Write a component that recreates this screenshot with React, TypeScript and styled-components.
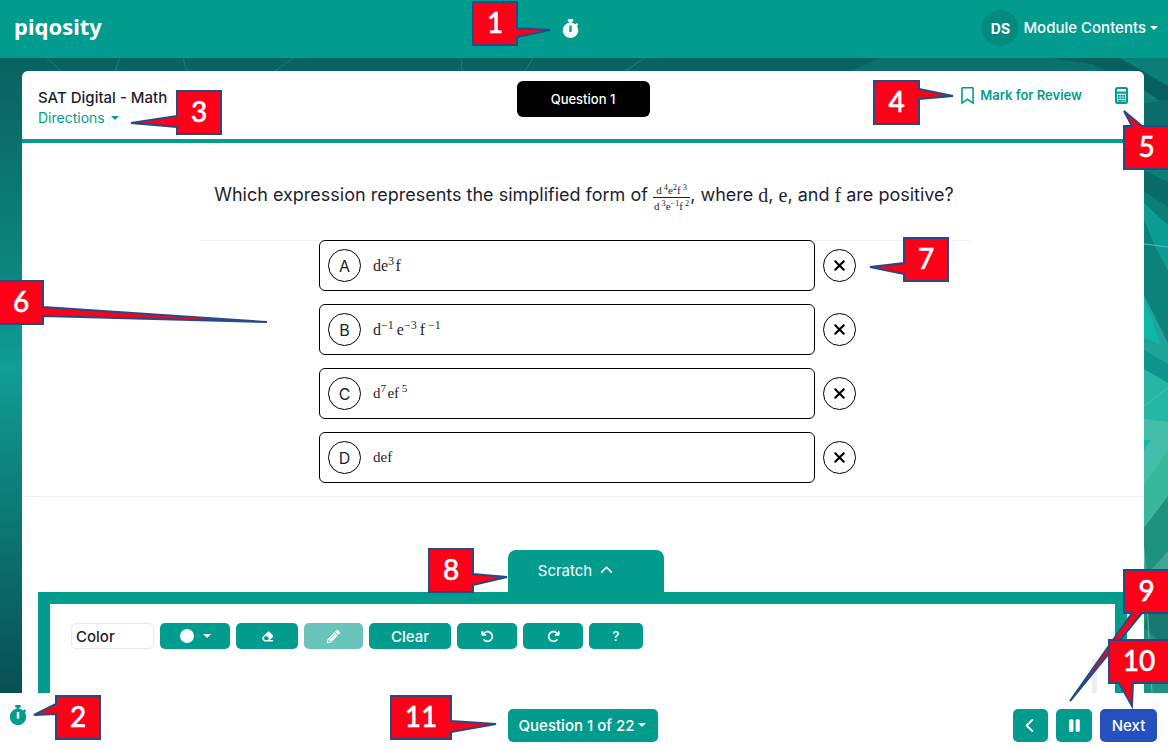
import React from 'react';
import styled, { createGlobalStyle, css } from 'styled-components';
import { FaStopwatch, FaPencilAlt } from 'react-icons/fa';
import {
  FaEraser,
  FaArrowRotateLeft,
  FaArrowRotateRight,
  FaPause,
  FaChevronLeft,
  FaChevronUp,
  FaXmark,
  FaRegBookmark,
} from 'react-icons/fa6';

const teal = '#029c8f';
const ink = '#1e1e2f';

const GlobalStyle = createGlobalStyle`
  *, *::before, *::after { box-sizing: border-box; }
  body { margin: 0; background: #fff; color: ${ink}; font-family: Inter, "Liberation Sans", sans-serif; }
  button { font-family: inherit; margin: 0; padding: 0; border: 0; background: none; color: inherit; cursor: pointer; }
  svg { display: block; flex: none; }
`;

const Page = styled.div`
  position: relative;
  min-height: 100vh;
  display: flex;
  flex-direction: column;
  overflow: hidden;
`;

const TopBar = styled.header`
  display: grid;
  grid-template-columns: 1fr auto 1fr;
  align-items: center;
  height: 58px;
  padding: 0 10px 2px 14px;
  background: ${teal};
  color: #fff;
`;

const Logo = styled.a`
  padding-bottom: 4px;
  color: #fff;
  text-decoration: none;
  font: 700 22px/32px "Noto Sans", "Open Sans", sans-serif;
`;

const TimerButton = styled.button`
  margin-right: 32px;
  font-size: 19px;
`;

const Account = styled.div`
  display: flex;
  justify-content: flex-end;
  align-items: center;
  gap: 5px;
`;

const Avatar = styled.span`
  display: grid;
  place-items: center;
  width: 36px;
  height: 36px;
  border-radius: 50%;
  background: #058a7d;
  font-size: 14px;
  font-weight: 700;
`;

const MenuButton = styled.button`
  display: flex;
  align-items: center;
  gap: 4px;
  font-size: 15px;
  font-weight: 500;
  line-height: 24px;
  white-space: nowrap;
`;

const Caret = styled.span`
  border: 4px solid transparent;
  border-top-color: currentColor;
  border-bottom: 0;
`;

const Stage = styled.main`
  position: relative;
  flex: 1;
  display: flex;
  padding: 13px 24px 0 22px;
  background: linear-gradient(180deg, #086260 0, #0a716c 14%, #0c877f 34%, #119e95 49%, #0f8d86 58%, #0d7b77 70%, #075054 100%);
`;

const Backdrop = styled.svg`
  position: absolute;
  top: 0;
  right: 0;
  height: 100%;
`;

const Card = styled.section`
  position: relative;
  flex: 1;
  min-width: 0;
  display: flex;
  flex-direction: column;
  border-radius: 6px 6px 0 0;
  background: #fff;
`;

const CardHeader = styled.div`
  display: grid;
  grid-template-columns: 1fr auto 1fr;
  align-items: start;
  height: 72px;
  padding: 10px 16px 0;
  border-bottom: 4px solid ${teal};
`;

const SectionTitle = styled.h1`
  margin: 6px 0 0;
  font-size: 15px;
  line-height: 21px;
  font-weight: 500;
`;

const Directions = styled.button`
  display: flex;
  align-items: center;
  gap: 6px;
  color: ${teal};
  font-size: 14px;
  line-height: 20px;
`;

const QuestionPill = styled.h2`
  margin: 0;
  width: 133px;
  border-radius: 6px;
  background: #000;
  color: #fff;
  text-align: center;
  font-size: 13px;
  line-height: 36px;
  font-weight: 500;
`;

const HeaderTools = styled.div`
  display: flex;
  justify-content: flex-end;
  align-items: center;
  gap: 33px;
  padding-top: 4px;
  color: ${teal};
`;

const ReviewButton = styled.button`
  display: flex;
  align-items: center;
  gap: 4px;
  font-size: 13px;
  line-height: 20px;
  font-weight: 600;
`;

const Problem = styled.div`
  display: flex;
  flex-direction: column;
  align-items: center;
  padding: 0 0 13px 6px;
  border-bottom: 1px solid #efefef;
`;

const Prompt = styled.p`
  display: flex;
  align-items: center;
  justify-content: center;
  height: 97px;
  margin: 0;
  padding: 6px 4px 0 0;
  font-size: 18px;
  line-height: 26px;
  white-space: pre;
`;

const MathText = styled.span<{ $size: number }>`
  font-family: "Liberation Serif", serif;
  font-size: ${(p) => p.$size}px;
  line-height: 1;
  white-space: pre;

  sup {
    font-size: 75%;
    line-height: 0;
    vertical-align: 6px;
  }
`;

const Fraction = styled.span`
  display: inline-flex;
  flex-direction: column;
  align-items: center;
  padding-top: 6px;

  ${MathText} { line-height: 14px; }
  ${MathText} + ${MathText} { border-top: 1px solid ${ink}; padding: 1px 1px 0; }
  sup { vertical-align: 4px; }
`;

const Choices = styled.ol`
  list-style: none;
  width: 100%;
  max-width: 772px;
  margin: 0;
  padding: 0 0 0 3px;
  border-top: 1px solid #eef3f6;
  display: flex;
  flex-direction: column;
  align-items: center;
  gap: 13px;
`;

const ChoiceRow = styled.li`
  display: flex;
  align-items: center;
  gap: 8px;

  &:first-child { margin-top: -1px; }
`;

const ChoiceButton = styled.button`
  display: flex;
  align-items: center;
  gap: 12px;
  width: 496px;
  height: 51px;
  padding: 0 8px;
  border: 1px solid #000;
  border-radius: 6px;
  background: #fff;
  text-align: left;
`;

const round = css`
  display: grid;
  place-items: center;
  width: 33px;
  height: 33px;
  border: 1px solid #000;
  border-radius: 50%;
  font-size: 16px;
`;

const Letter = styled.span`${round}`;
const StrikeButton = styled.button`
  ${round}
  background: #fff;
  color: #000;
`;

const Scratch = styled.section`
  flex: 1;
  display: flex;
  flex-direction: column;
  align-items: center;
  margin: 53px 17px 0 16px;
`;

const ScratchTab = styled.button`
  display: flex;
  align-items: center;
  justify-content: center;
  gap: 8px;
  width: 156px;
  height: 42px;
  padding: 0 20px 2px 0;
  margin-left: 6px;
  border-radius: 8px 8px 0 0;
  background: ${teal};
  color: #fff;
  font-size: 15px;
`;

const ScratchPad = styled.div`
  flex: 1;
  align-self: stretch;
  display: flex;
  justify-content: space-between;
  min-height: 101px;
  padding: 19px 18px 0 21px;
  border: 12px solid ${teal};
  border-bottom: 0;
`;

const Toolbar = styled.div`
  display: flex;
  gap: 6px;
  height: 26px;
`;

const ColorLabel = styled.label`
  width: 83px;
  padding-left: 4px;
  border: 1px solid #e8e8f0;
  border-radius: 5px;
  font-size: 15px;
  line-height: 26px;
  font-weight: 500;
`;

const ToolButton = styled.button<{ $width: number; $faded?: boolean }>`
  display: flex;
  align-items: center;
  justify-content: center;
  gap: 9px;
  width: ${(p) => p.$width}px;
  border-radius: 5px;
  background: ${(p) => (p.$faded ? '#69c4bb' : teal)};
  color: #fff;
  font-size: ${(p) => (p.$width > 80 ? 15 : 13)}px;
  font-weight: 500;
`;

const Swatch = styled.span`
  width: 14px;
  height: 14px;
  border-radius: 50%;
  background: #fff;
`;

const ScrollThumb = styled.div`
  align-self: flex-end;
  width: 5px;
  height: 34px;
  background: #eceff2;
`;

const BottomBar = styled.footer`
  display: grid;
  grid-template-columns: 1fr auto 1fr;
  align-items: center;
  height: 56px;
  padding: 8px 11px 0 8px;
  background: #fff;
`;

const BottomTimer = styled.button`
  justify-self: start;
  padding-bottom: 20px;
  color: ${teal};
  font-size: 20px;
`;

const NavButton = styled.button<{ $width: number; $primary?: boolean }>`
  display: flex;
  align-items: center;
  justify-content: center;
  gap: 4px;
  width: ${(p) => p.$width}px;
  height: 33px;
  border-radius: 5px;
  background: ${(p) => (p.$primary ? '#2550bd' : teal)};
  color: #fff;
  font-size: 15px;
  font-weight: 500;
`;

const NavGroup = styled.div`
  display: flex;
  justify-content: flex-end;
  gap: 8px;
`;

const CalloutLayer = styled.div`
  position: absolute;
  inset: 0;
  overflow: hidden;
  pointer-events: none;
`;

const Pin = styled.div<{ $x: number; $y: number; $w: number; $from: 'left' | 'center' | 'right' }>`
  position: absolute;
  top: ${(p) => p.$y}px;
  left: ${(p) => (p.$from === 'left' ? `${p.$x}px` : p.$from === 'center' ? `calc(50% + ${p.$x}px)` : `calc(100% - ${p.$x}px)`)};
  width: ${(p) => p.$w}px;
  height: 45px;
  color: #fff;
  text-align: center;
  font: 500 28px/43px Lato, sans-serif;

  svg { position: absolute; inset: 0; overflow: visible; }
  span { position: relative; -webkit-text-stroke: 0.5px #fff; }
`;

type Point = [number, number];
type CalloutData = {
  n: number;
  from: 'left' | 'center' | 'right';
  x: number;
  y: number;
  w: number;
  side: 'left' | 'right' | 'top' | 'bottom';
  base: Point;
  tip: Point;
};

const callouts: CalloutData[] = [
  { n: 1, from: 'center', x: -112, y: 1, w: 46, side: 'right', base: [27, 36], tip: [78, 29] },
  { n: 2, from: 'left', x: 55, y: 695, w: 46, side: 'left', base: [9, 19], tip: [-21, 20] },
  { n: 3, from: 'left', x: 176, y: 90, w: 46, side: 'left', base: [26, 37], tip: [-45, 33] },
  { n: 4, from: 'right', x: 295, y: 80, w: 47, side: 'right', base: [9, 19], tip: [80, 16] },
  { n: 5, from: 'right', x: 45, y: 125, w: 47, side: 'top', base: [9, 19], tip: [1, -14] },
  { n: 6, from: 'left', x: -2, y: 280, w: 46, side: 'right', base: [27, 36], tip: [269, 42] },
  { n: 7, from: 'center', x: 319, y: 237, w: 46, side: 'left', base: [26, 37], tip: [-33, 30] },
  { n: 8, from: 'center', x: -156, y: 548, w: 46, side: 'right', base: [26, 37], tip: [79, 29] },
  { n: 9, from: 'right', x: 45, y: 569, w: 47, side: 'bottom', base: [9, 19], tip: [-53, 132] },
  { n: 10, from: 'right', x: 60, y: 639, w: 62, side: 'bottom', base: [11, 25], tip: [24, 67] },
  { n: 11, from: 'center', x: -194, y: 695, w: 62, side: 'right', base: [26, 37], tip: [106, 29] },
];

function calloutPath({ w, side, base: [a, b], tip }: CalloutData) {
  const r = w - 1;
  const h = 44;
  const t = tip.join(',');
  const top = side === 'top' ? `L${a},1 L${t} L${b},1` : '';
  const right = side === 'right' ? `L${r},${a} L${t} L${r},${b}` : '';
  const bottom = side === 'bottom' ? `L${b},${h} L${t} L${a},${h}` : '';
  const left = side === 'left' ? `L1,${b} L${t} L1,${a}` : '';
  return `M1,1 ${top} L${r},1 ${right} L${r},${h} ${bottom} L1,${h} ${left} Z`;
}

function Callout(props: CalloutData) {
  return (
    <Pin $x={props.x} $y={props.y} $w={props.w} $from={props.from}>
      <svg width={props.w} height="45" aria-hidden="true">
        <path d={calloutPath(props)} fill="#ff0019" stroke="#264a85" strokeWidth="2" strokeLinejoin="miter" />
      </svg>
      <span>{props.n}</span>
    </Pin>
  );
}

function CalculatorIcon() {
  return (
    <svg width="13" height="17" viewBox="0 0 13 17" fill="none" stroke="currentColor" aria-hidden="true">
      <rect x="1" y="1" width="11" height="15" rx="1.5" strokeWidth="2" />
      <path d="M1 5.6h11" strokeWidth="2.2" />
      <path d="M2.6 8.7h2.2M5.4 8.7h2.2M8.2 8.7h2.2M2.6 11.3h2.2M5.4 11.3h2.2M8.2 11.3h2.2M2.6 13.9h5M8.2 13.9h2.2" strokeWidth="1.9" />
    </svg>
  );
}

const choices: { letter: string; size: number; math: React.ReactNode }[] = [
  { letter: 'A', size: 16, math: <>de<sup>3</sup>{'\u200a'}f</> },
  { letter: 'B', size: 16, math: <>d<sup>−1 </sup>e<sup>−3 </sup>f<sup> −1</sup></> },
  { letter: 'C', size: 15, math: <>d<sup>7</sup>{'\u200a'}ef<sup> 5</sup></> },
  { letter: 'D', size: 15, math: <>def</> },
];

export default function App() {
  return (
    <Page>
      <GlobalStyle />
      <TopBar>
        <Logo href="#">piqosity</Logo>
        <TimerButton aria-label="Timer"><FaStopwatch /></TimerButton>
        <Account>
          <Avatar>DS</Avatar>
          <MenuButton>Module Contents<Caret /></MenuButton>
        </Account>
      </TopBar>

      <Stage>
        <Backdrop width="1168" viewBox="0 0 1168 635" preserveAspectRatio="xMaxYMin slice" aria-hidden="true">
          <g fill="none" stroke="#1a9187" strokeWidth="1" opacity="0.7">
            <path d="M47 0l14 13M120 0l-5 13M183 0l4 13M293 0l-18 13M461 0l1 13M533 0l-8 13M645 0l-20 13M981 0l3 13" />
          </g>
          <path d="M880 0h170l90 13H850z" fill="#0a716b" />
          <path d="M1110 0h58v635h-24V13z" fill="#0b7e78" />
          <path d="M1080 0h40l48 28v20l-24-16z" fill="#075f60" />
          <path d="M1144 45l24-3v25l-24 12z" fill="#0b6d6b" />
          <path d="M1144 112l24 12v25l-24-16z" fill="#0a6b69" />
          <path d="M1144 145l24 22v56l-24-62z" fill="#0d9c93" />
          <path d="M1144 167l24 46v80l-24-48z" fill="#0d827b" />
          <path d="M1144 237l24 48v70l-24-55z" fill="#1fa298" />
          <path d="M1144 240l17 47-17-7z" fill="#0db8a9" />
          <path d="M1144 292l24 14v19l-24-14z" fill="#0e958c" />
          <path d="M1144 311l24 14v40h-24z" fill="#25b6a5" />
          <path d="M1144 361l24 3v75l-24 30z" fill="#45bdab" />
          <path d="M1144 427l24-35v48l-24 30z" fill="#39b79b" />
          <path d="M1144 382h7l-7 10z" fill="#10b9ac" />
          <path d="M1144 470l24-32v197h-24z" fill="#20917f" />
          <path d="M1144 520l24-27v30l-24 14z" fill="#41a594" />
          <path d="M1150 540l18 10v40l-24-20z" fill="#17786f" />
          <path d="M1144 186l24 3M1144 348l24-18M1144 490l8 145" stroke="#55beb4" strokeWidth="1" />
        </Backdrop>

        <Card>
          <CardHeader>
            <div>
              <SectionTitle>SAT Digital - Math</SectionTitle>
              <Directions>Directions <Caret /></Directions>
            </div>
            <QuestionPill>Question 1</QuestionPill>
            <HeaderTools>
              <ReviewButton><FaRegBookmark size={17} />Mark for Review</ReviewButton>
              <button aria-label="Calculator"><CalculatorIcon /></button>
            </HeaderTools>
          </CardHeader>

          <Problem>
            <Prompt>
              {'Which expression represents the simplified form of '}
              <Fraction>
                <MathText $size={11}>d<sup> 4</sup>e<sup>2</sup>f<sup> 3</sup></MathText>
                <MathText $size={11}>d<sup> 3</sup>e<sup>−1</sup>f<sup> 2</sup></MathText>
              </Fraction>
              {', where '}<MathText $size={20}>d</MathText>
              {', '}<MathText $size={20}>e</MathText>
              {', and '}<MathText $size={20}>f</MathText>
              {' are positive?'}
            </Prompt>
            <Choices>
              {choices.map((c) => (
                <ChoiceRow key={c.letter}>
                  <ChoiceButton>
                    <Letter>{c.letter}</Letter>
                    <MathText $size={c.size}>{c.math}</MathText>
                  </ChoiceButton>
                  <StrikeButton aria-label={`Eliminate ${c.letter}`}><FaXmark size={17} /></StrikeButton>
                </ChoiceRow>
              ))}
            </Choices>
          </Problem>

          <Scratch>
            <ScratchTab>Scratch <FaChevronUp size={13} /></ScratchTab>
            <ScratchPad>
              <Toolbar>
                <ColorLabel htmlFor="pen-color">Color</ColorLabel>
                <ToolButton id="pen-color" $width={70}><Swatch /><Caret /></ToolButton>
                <ToolButton $width={62} aria-label="Eraser"><FaEraser /></ToolButton>
                <ToolButton $width={59} $faded aria-label="Pencil"><FaPencilAlt /></ToolButton>
                <ToolButton $width={82}>Clear</ToolButton>
                <ToolButton $width={60} aria-label="Undo"><FaArrowRotateLeft /></ToolButton>
                <ToolButton $width={60} aria-label="Redo"><FaArrowRotateRight /></ToolButton>
                <ToolButton $width={54}>?</ToolButton>
              </Toolbar>
              <ScrollThumb />
            </ScratchPad>
          </Scratch>
        </Card>
      </Stage>

      <BottomBar>
        <BottomTimer aria-label="Timer"><FaStopwatch /></BottomTimer>
        <NavButton $width={150}>Question 1 of 22<Caret /></NavButton>
        <NavGroup>
          <NavButton $width={35} aria-label="Previous"><FaChevronLeft /></NavButton>
          <NavButton $width={36} aria-label="Pause"><FaPause size={17} /></NavButton>
          <NavButton $width={57} $primary>Next</NavButton>
        </NavGroup>
      </BottomBar>

      <CalloutLayer>
        {callouts.map((c) => <Callout key={c.n} {...c} />)}
      </CalloutLayer>
    </Page>
  );
}
